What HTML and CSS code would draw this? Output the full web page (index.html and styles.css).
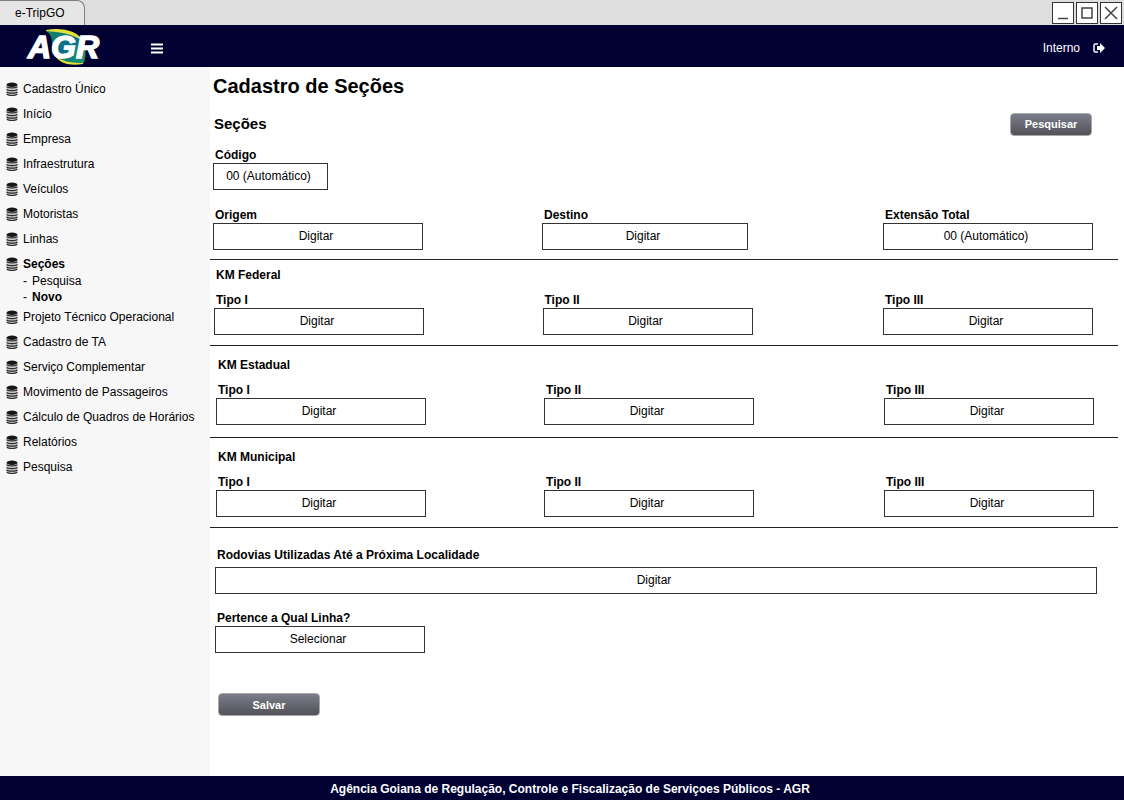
FILE: index.html
```html
<!DOCTYPE html>
<html lang="pt-BR">
<head>
<meta charset="utf-8">
<meta name="viewport" content="width=device-width, initial-scale=1">
<title>e-TripGO</title>
<link rel="stylesheet" href="styles.css">
</head>
<body>
<svg class="defs" aria-hidden="true">
  <symbol id="db" viewBox="0 0 12 14">
    <path d="M.7 3v8.500c0 1.200 2.300 2 5.300 2s5.300-.8 5.300-2V3z" fill="#c4c4c4"/>
    <ellipse cx="6" cy="2.700" rx="5.500" ry="2.200" fill="#161616"/>
    <path d="M.6 4.500C1.500 6.300 10.500 6.300 11.400 4.500M.6 7.200C1.500 9 10.500 9 11.400 7.200M.6 9.700C1.500 11.600 10.500 11.600 11.400 9.700M.8 11.900C2 14 10 14 11.200 11.900" fill="none" stroke="#2b2b2b" stroke-width="1.200"/>
  </symbol>
</svg>
<div class="titlebar">
  <div class="tab">e-TripGO</div>
  <div class="window-controls">
    <button class="win-btn" type="button" aria-label="Minimizar"><svg viewBox="0 0 20 20"><path d="M5 15.500h10"/></svg></button>
    <button class="win-btn" type="button" aria-label="Maximizar"><svg viewBox="0 0 20 20"><path d="M5 5h10v10H5z"/></svg></button>
    <button class="win-btn" type="button" aria-label="Fechar"><svg viewBox="0 0 20 20"><path d="M4 4l12 12M16 4L4 16"/></svg></button>
  </div>
</div>
<header class="header">
  <a class="logo" href="#" aria-label="AGR">
    <svg viewBox="0 0 76 40">
      <defs><linearGradient id="g" x1="0" y1="0" x2="1" y2="1"><stop offset="0" stop-color="#17855a"/><stop offset=".5" stop-color="#0a6f8c"/><stop offset="1" stop-color="#1d9c62"/></linearGradient></defs>
      <path d="M20 5C35 2 52 6 57 15C61 24 60 33 57 38C43 38 31 34 27 25C25 17 28 10 20 5z" fill="url(#g)"/>
      <path d="M20 4C36 1 52 5 57 15C47 8 34 6 20 5zM29 29C36 36 46 37 57 37V38C45 40 33 38 29 29z" fill="#e0df3c"/>
      <text class="logo-text" x="2" y="32">AGR</text>
    </svg>
  </a>
  <button class="menu" type="button" aria-label="Menu"><svg viewBox="0 0 12 11"><path d="M0 1.500h12M0 5.500h12M0 9.500h12" stroke="#fff" stroke-width="2"/></svg></button>
  <a class="user" href="#">Interno
    <svg viewBox="0 0 12 10"><path d="M5 1H2.500Q1 1 1 2.500v5Q1 9 2.500 9H5" fill="none" stroke="#fff" stroke-width="1.500"/><path d="M4 3h3V0L12 5 7 10V7H4z" fill="#fff"/></svg>
  </a>
</header>
<div class="body">
  <nav class="sidebar">
    <ul class="nav">
      <li><a href="#"><svg class="db"><use href="#db"/></svg>Cadastro Único</a></li>
      <li><a href="#"><svg class="db"><use href="#db"/></svg>Início</a></li>
      <li><a href="#"><svg class="db"><use href="#db"/></svg>Empresa</a></li>
      <li><a href="#"><svg class="db"><use href="#db"/></svg>Infraestrutura</a></li>
      <li><a href="#"><svg class="db"><use href="#db"/></svg>Veículos</a></li>
      <li><a href="#"><svg class="db"><use href="#db"/></svg>Motoristas</a></li>
      <li><a href="#"><svg class="db"><use href="#db"/></svg>Linhas</a></li>
      <li class="open"><a class="current" href="#"><svg class="db"><use href="#db"/></svg>Seções</a>
        <ul class="subnav">
          <li><span>-</span><a href="#">Pesquisa</a></li>
          <li><span>-</span><a class="current" href="#">Novo</a></li>
        </ul>
      </li>
      <li><a href="#"><svg class="db"><use href="#db"/></svg>Projeto Técnico Operacional</a></li>
      <li><a href="#"><svg class="db"><use href="#db"/></svg>Cadastro de TA</a></li>
      <li><a href="#"><svg class="db"><use href="#db"/></svg>Serviço Complementar</a></li>
      <li><a href="#"><svg class="db"><use href="#db"/></svg>Movimento de Passageiros</a></li>
      <li><a href="#"><svg class="db"><use href="#db"/></svg>Cálculo de Quadros de Horários</a></li>
      <li><a href="#"><svg class="db"><use href="#db"/></svg>Relatórios</a></li>
      <li><a href="#"><svg class="db"><use href="#db"/></svg>Pesquisa</a></li>
    </ul>
  </nav>
  <main class="main">
    <h1 class="title">Cadastro de Seções</h1>
    <div class="subhead">
      <h2 class="subtitle">Seções</h2>
      <button class="btn search" type="button">Pesquisar</button>
    </div>
    <form class="form">
      <section class="group first">
        <div class="field code"><label for="codigo">Código</label><input id="codigo" value="00 (Automático)" readonly></div>
        <div class="row">
          <div class="field"><label for="origem">Origem</label><input id="origem" placeholder="Digitar"></div>
          <div class="field destination"><label for="destino">Destino</label><input id="destino" placeholder="Digitar"></div>
          <div class="field"><label for="extensao">Extensão Total</label><input id="extensao" value="00 (Automático)" readonly></div>
        </div>
      </section>
      <section class="group">
        <h3 class="group-title">KM Federal</h3>
        <div class="row">
          <div class="field"><label for="f1">Tipo I</label><input id="f1" placeholder="Digitar"></div>
          <div class="field"><label for="f2">Tipo II</label><input id="f2" placeholder="Digitar"></div>
          <div class="field"><label for="f3">Tipo III</label><input id="f3" placeholder="Digitar"></div>
        </div>
      </section>
      <section class="group inset">
        <h3 class="group-title">KM Estadual</h3>
        <div class="row">
          <div class="field"><label for="e1">Tipo I</label><input id="e1" placeholder="Digitar"></div>
          <div class="field"><label for="e2">Tipo II</label><input id="e2" placeholder="Digitar"></div>
          <div class="field"><label for="e3">Tipo III</label><input id="e3" placeholder="Digitar"></div>
        </div>
      </section>
      <section class="group inset municipal">
        <h3 class="group-title">KM Municipal</h3>
        <div class="row">
          <div class="field"><label for="m1">Tipo I</label><input id="m1" placeholder="Digitar"></div>
          <div class="field"><label for="m2">Tipo II</label><input id="m2" placeholder="Digitar"></div>
          <div class="field"><label for="m3">Tipo III</label><input id="m3" placeholder="Digitar"></div>
        </div>
      </section>
      <section class="group last">
        <div class="field wide"><label for="rodovias">Rodovias Utilizadas Até a Próxima Localidade</label><input id="rodovias" placeholder="Digitar"></div>
        <div class="field"><label for="linha">Pertence a Qual Linha?</label><select id="linha"><option>Selecionar</option></select></div>
        <button class="btn save" type="button">Salvar</button>
      </section>
    </form>
  </main>
</div>
<footer class="footer">Agência Goiana de Regulação, Controle e Fiscalização de Serviçoes Públicos - AGR</footer>
</body>
</html>
```
FILE: styles.css
```css
* { box-sizing: border-box; }
body {
  margin: 0;
  min-height: 100vh;
  display: flex;
  flex-direction: column;
  font: 12px/16px "Liberation Sans", Arial, sans-serif;
  color: #000;
  background: #fff;
}
a { color: inherit; text-decoration: none; }
button, input, select { font: inherit; color: inherit; }
.defs { display: none; }

.titlebar {
  display: flex;
  justify-content: space-between;
  height: 25px;
  background: #dedede;
}
.tab {
  width: 85px;
  padding: 4px 0 0 15px;
  background: #e6e6e6;
  border: 1px solid #808080;
  border-width: 1px 1px 0 0;
  border-radius: 0 8px 0 0;
}
.window-controls { display: flex; gap: 2px; padding: 2px 2px 0 0; }
.win-btn {
  width: 22px;
  height: 22px;
  padding: 0;
  background: #fff;
  border: 1px solid #333;
}
.win-btn svg { display: block; width: 20px; height: 20px; fill: none; stroke: #444; stroke-width: 1.500; }

.header {
  display: flex;
  align-items: center;
  height: 42px;
  padding: 0 19px 0 26px;
  background: #000033;
  color: #fff;
}
.logo svg { display: block; width: 76px; height: 40px; }
.logo-text { font: italic bold 32px "Liberation Sans", Arial, sans-serif; fill: #fff; stroke: #fff; stroke-width: 1.500; }
.menu { margin: 4px 0 0 49px; padding: 0; border: 0; background: none; }
.menu svg { display: block; width: 12px; height: 11px; }
.user { display: flex; align-items: center; gap: 13px; margin: 4px 0 0 auto; }
.user svg { width: 12px; height: 10px; }

.body { flex: 1; display: flex; }
.sidebar { flex: 0 0 210px; padding: 14px 0 0 6px; background: #f7f7f7; }
.nav, .subnav { margin: 0; padding: 0; list-style: none; }
.nav > li { margin-bottom: 9px; }
.nav > .open { margin-bottom: 4px; }
.nav > li > a { display: flex; align-items: center; gap: 5px; white-space: nowrap; }
.nav .current { font-weight: bold; }
.db { width: 12px; height: 14px; }
.subnav { padding: 1px 0 0 17px; }
.subnav li { display: flex; gap: 5px; }

.main { flex: 1; min-width: 0; padding: 7px 6px 0 0; }
.title { margin: 0; padding-left: 3px; font-size: 20px; line-height: 24px; }
.subhead {
  display: flex;
  align-items: center;
  justify-content: space-between;
  margin-top: 14px;
  padding: 0 26px 0 4px;
}
.subtitle { margin: 0; font-size: 15px; line-height: 24px; }
.btn {
  height: 23px;
  padding: 0;
  border: 1px solid #a8a8a8;
  border-radius: 4px;
  background: linear-gradient(#7b7d8b, #525257);
  color: #fff;
  font-size: 11px;
  font-weight: bold;
}
.search { width: 82px; }

.group { padding: 7px 25px 10px 4px; border-bottom: 1px solid #222; }
.group.first { padding: 11px 25px 9px 3px; }
.group.inset { padding: 11px 24px 12px 6px; }
.group.municipal { padding-bottom: 10px; }
.group.last { padding: 19px 21px 0 5px; border: 0; }
.group-title { margin: 0 0 9px; padding-left: 2px; font-size: 12px; line-height: 16px; }
.row { display: grid; grid-template-columns: 329fr 341fr 210fr; }
.field { display: flex; flex-direction: column; align-items: flex-start; }
.field label { padding-left: 2px; font-weight: bold; }
.field input, .field select {
  width: 210px;
  max-width: 100%;
  height: 27px;
  padding: 0 4px 2px 0;
  border: 1px solid #333;
  border-radius: 0;
  background: #fff;
  text-align: center;
}
.field select { appearance: none; text-align-last: center; }
.field input::placeholder { color: #000; opacity: 1; }
.field.code { margin-bottom: 17px; }
.field.code input { width: 115px; }
.field.destination input { width: 206px; }
.field.wide { margin-bottom: 16px; }
.field.wide label { margin-bottom: 4px; }
.field.wide input { width: 100%; }
.save { width: 102px; margin: 40px 0 0 3px; }

.footer {
  height: 24px;
  padding: 5px 0 0 16px;
  background: #000033;
  color: #fff;
  font-weight: bold;
  text-align: center;
}
```
